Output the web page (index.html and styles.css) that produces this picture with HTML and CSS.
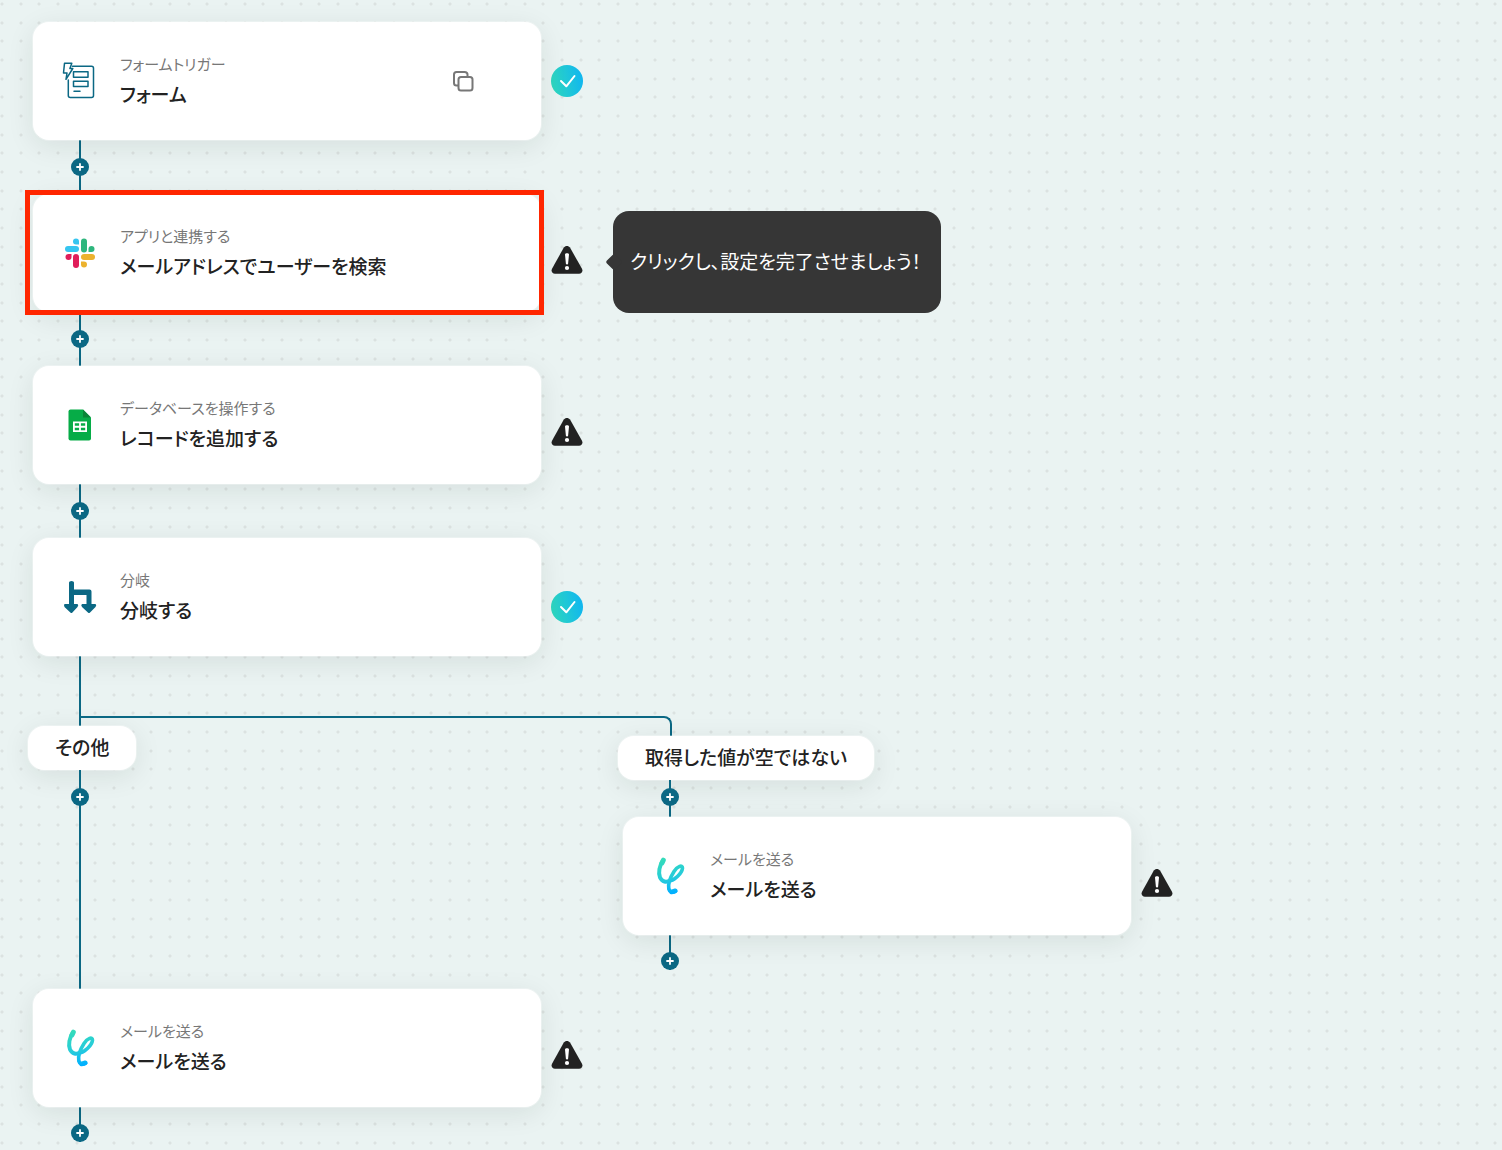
FILE: index.html
```html
<!DOCTYPE html>
<html lang="ja">

<head>
    <meta charset="UTF-8">
    <meta name="viewport" content="width=device-width, initial-scale=1.0">
    <title>フォーム</title>
    <link rel="stylesheet" href="styles.css">
</head>

<body>
    <!-- shared icons -->
    <svg class="defs" width="0" height="0" aria-hidden="true">
        <defs>
            <linearGradient id="checkFill" x1="0" y1="0.6" x2="1" y2="0.4">
                <stop offset="0" stop-color="#2fd8be" />
                <stop offset="1" stop-color="#10b6f0" />
            </linearGradient>
            <linearGradient id="logoFill" gradientUnits="userSpaceOnUse" x1="10" y1="2" x2="20" y2="37">
                <stop offset="0" stop-color="#35dcb8" />
                <stop offset="0.6" stop-color="#25cbdc" />
                <stop offset="1" stop-color="#00b0ff" />
            </linearGradient>
        </defs>
        <symbol id="check" viewBox="0 0 32 32">
            <circle cx="16" cy="16" r="16" fill="url(#checkFill)" />
            <path d="M10 16l5.300 5.300L23.500 11" fill="none" stroke="#fff" stroke-width="2" stroke-linecap="round" stroke-linejoin="round" />
        </symbol>
        <symbol id="warn" viewBox="0 0 32 30">
            <path d="M12.800 2.600C14.200 .300 17.600 .300 19 2.600L31 23.800C32.200 26.200 30.800 28.800 28 28.800H4C1.200 28.800 -.200 26.200 1 23.800Z" fill="#222" />
            <path d="M14 9.500c0-1.600 4-1.600 4 0l-.900 9.200c-.1 1.100-2.100 1.100-2.200 0z" fill="#fff" />
            <circle cx="16" cy="23" r="2.100" fill="#fff" />
        </symbol>
        <symbol id="plus" viewBox="0 0 18 18">
            <path d="M9 6v6M6 9h6" fill="none" stroke="#fff" stroke-width="1.800" stroke-linecap="round" />
        </symbol>
        <symbol id="mail" viewBox="0 0 36 40">
            <g fill="none" stroke="url(#logoFill)" stroke-linecap="round" stroke-linejoin="round">
                <path d="M11 4.500C7.500 9 6 17 8 21.500C10 26 14.500 26.500 18 24.500" stroke-width="4" />
                <path d="M11.300 4.200L10 7" stroke-width="5" />
                <path d="M16 25.500C23 24.500 30 17 30.500 12C30.500 8.500 25.500 10 22 15.500C18.500 21 15.800 28 16.800 33C17.500 36 20.500 37.300 23.600 35.300" stroke-width="3.600" />
                <path d="M19.500 36L23.300 34.800" stroke-width="4.600" />
            </g>
        </symbol>
    </svg>

    <main class="flow">
        <div class="step">
            <div class="card">
                <svg class="icon" viewBox="0 0 36 40" aria-hidden="true">
                    <g fill="none" stroke="#0b6884" stroke-width="1.500" stroke-linejoin="round" stroke-linecap="round">
                        <path d="M10.500 5.200H29.500Q31.500 5.200 31.500 7.200V34.500Q31.500 36.500 29.500 36.500H8.300Q6.300 36.500 6.300 34.500V19" />
                        <rect x="11.500" y="10.700" width="14.500" height="5.500" />
                        <rect x="11.500" y="20.300" width="14.500" height="5.300" />
                        <path d="M12 30.300h6" />
                        <path d="M2.500 2.300H9.800L7.900 7.500H10.800L4 18.300L5 12H1.500Z" fill="#fff" />
                    </g>
                </svg>
                <div class="text">
                    <p class="kind">フォームトリガー</p>
                    <h2 class="name">フォーム</h2>
                </div>
                <button type="button" class="copy" aria-label="コピー">
                    <svg width="22" height="22" viewBox="0 0 22 22" aria-hidden="true">
                        <g fill="none" stroke="#777" stroke-width="2">
                            <path d="M6 15.500H4.500Q2 15.500 2 13V4.500Q2 2 4.500 2H12.500Q15.500 2 15.500 4.500V6" />
                            <rect x="6.500" y="7" width="14" height="13.500" rx="2.500" />
                        </g>
                    </svg>
                </button>
            </div>
            <svg class="status" width="32" height="32" role="img" aria-label="設定完了"><use href="#check" /></svg>
        </div>

        <div class="link">
            <button type="button" class="add" aria-label="追加"><svg width="18" height="18"><use href="#plus" /></svg></button>
        </div>

        <div class="step">
            <div class="card selected">
                <svg class="icon" viewBox="0 0 36 40" aria-hidden="true">
                    <g fill="#36c5f0">
                        <path d="M17 11.500V8.500A3 3 0 1 0 14 11.500Z" />
                        <rect x="3" y="13" width="14" height="6" rx="3" />
                    </g>
                    <g fill="#2eb67d">
                        <rect x="19" y="5.500" width="6" height="14" rx="3" />
                        <path d="M26.500 19H29.500A3 3 0 1 0 26.500 16Z" />
                    </g>
                    <g fill="#ecb22e">
                        <rect x="19" y="21" width="14" height="6" rx="3" />
                        <path d="M19 28.500V31.500A3 3 0 1 0 22 28.500Z" />
                    </g>
                    <g fill="#e01e5a">
                        <rect x="11" y="21" width="6" height="14" rx="3" />
                        <path d="M9.500 21H6.500A3 3 0 1 0 9.500 24Z" />
                    </g>
                </svg>
                <div class="text">
                    <p class="kind">アプリと連携する</p>
                    <h2 class="name">メールアドレスでユーザーを検索</h2>
                </div>
            </div>
            <svg class="status warn" width="32" height="30" role="img" aria-label="未設定"><use href="#warn" /></svg>
            <div class="tooltip" role="tooltip">クリックし、設定を完了させましょう！</div>
        </div>

        <div class="link">
            <button type="button" class="add" aria-label="追加"><svg width="18" height="18"><use href="#plus" /></svg></button>
        </div>

        <div class="step">
            <div class="card">
                <svg class="icon" viewBox="0 0 36 40" aria-hidden="true">
                    <path d="M8.500 4.500H21L29 12.500V33.500Q29 35.500 27 35.500H8.500Q6.500 35.500 6.500 33.500V6.500Q6.500 4.500 8.500 4.500Z" fill="#06ac47" />
                    <path d="M21 4.500L29 12.500H21Z" fill="#0a8437" />
                    <path d="M11 16.500H25V27H11Z" fill="#fff" />
                    <path d="M12.800 18.300h4.300v2.500h-4.300zM18.900 18.300h4.300v2.500h-4.300zM12.800 22.700h4.300v2.500h-4.300zM18.900 22.700h4.300v2.500h-4.300z" fill="#06ac47" />
                </svg>
                <div class="text">
                    <p class="kind">データベースを操作する</p>
                    <h2 class="name">レコードを追加する</h2>
                </div>
            </div>
            <svg class="status warn" width="32" height="30" role="img" aria-label="未設定"><use href="#warn" /></svg>
        </div>

        <div class="link">
            <button type="button" class="add" aria-label="追加"><svg width="18" height="18"><use href="#plus" /></svg></button>
        </div>

        <div class="step">
            <div class="card">
                <svg class="icon" viewBox="0 0 36 40" aria-hidden="true">
                    <path d="M7 5.500Q7 4 9.500 4Q12 4 12 5.500V12.500H27.500Q29.500 12.500 29.500 14.500V27H33.500Q35 28 33.500 30L27.800 35.700Q27 36.500 26.200 35.700L20 30Q18.500 28 20 27H24.500V18H12V27H15.500Q17 28 15.500 30L10.200 35.700Q9.400 36.500 8.600 35.700L2.500 30Q1.500 28 2.500 27H7Z" fill="#0b6884" />
                </svg>
                <div class="text">
                    <p class="kind">分岐</p>
                    <h2 class="name">分岐する</h2>
                </div>
            </div>
            <svg class="status done" width="32" height="32" role="img" aria-label="設定完了"><use href="#check" /></svg>
        </div>

        <div class="branches">
            <section class="branch">
                <div class="trunk"></div>
                <h3 class="label">その他</h3>
                <div class="link">
                    <button type="button" class="add" aria-label="追加"><svg width="18" height="18"><use href="#plus" /></svg></button>
                </div>
                <div class="rail"></div>
            </section>

            <section class="branch side">
                <div class="elbow"></div>
                <h3 class="label">取得した値が空ではない</h3>
                <div class="link narrow">
                    <button type="button" class="add" aria-label="追加"><svg width="18" height="18"><use href="#plus" /></svg></button>
                </div>
                <div class="step">
                    <div class="card">
                        <svg class="icon" viewBox="0 0 36 40" aria-hidden="true"><use href="#mail" /></svg>
                        <div class="text">
                            <p class="kind">メールを送る</p>
                            <h2 class="name">メールを送る</h2>
                        </div>
                    </div>
                    <svg class="status warn" width="32" height="30" role="img" aria-label="未設定"><use href="#warn" /></svg>
                </div>
                <div class="link end">
                    <button type="button" class="add" aria-label="追加"><svg width="18" height="18"><use href="#plus" /></svg></button>
                </div>
            </section>
        </div>

        <div class="step">
            <div class="card">
                <svg class="icon" viewBox="0 0 36 40" aria-hidden="true"><use href="#mail" /></svg>
                <div class="text">
                    <p class="kind">メールを送る</p>
                    <h2 class="name">メールを送る</h2>
                </div>
            </div>
            <svg class="status warn" width="32" height="30" role="img" aria-label="未設定"><use href="#warn" /></svg>
        </div>
        <div class="link end">
            <button type="button" class="add" aria-label="追加"><svg width="18" height="18"><use href="#plus" /></svg></button>
        </div>
    </main>
</body>

</html>
```
FILE: styles.css
```css
:root {
    --line: #0b6884;
    --dot: #dbe2e1;
}

* {
    box-sizing: border-box;
}

body {
    margin: 0;
    min-height: 100vh;
    font-family: "Noto Sans CJK JP", sans-serif;
    font-feature-settings: "palt";
    color: #222;
    background-color: #eaf3f2;
    /* three dots per 56px tile in each direction */
    background-image:
        radial-gradient(circle at 2px 4px, var(--dot) 1px, transparent 2px),
        radial-gradient(circle at 21px 4px, var(--dot) 1px, transparent 2px),
        radial-gradient(circle at 39px 4px, var(--dot) 1px, transparent 2px),
        radial-gradient(circle at 2px 23px, var(--dot) 1px, transparent 2px),
        radial-gradient(circle at 21px 23px, var(--dot) 1px, transparent 2px),
        radial-gradient(circle at 39px 23px, var(--dot) 1px, transparent 2px),
        radial-gradient(circle at 2px 41px, var(--dot) 1px, transparent 2px),
        radial-gradient(circle at 21px 41px, var(--dot) 1px, transparent 2px),
        radial-gradient(circle at 39px 41px, var(--dot) 1px, transparent 2px);
    background-size: 56px 56px;
}

.defs {
    position: absolute;
}

.flow {
    padding: 22px 33px 8px;
}

.step {
    position: relative;
    display: flex;
    align-items: center;
    gap: 10px;
}

.card {
    position: relative;
    display: flex;
    align-items: center;
    width: 508px;
    padding: 28px 67px 28px 29px;
    background-color: #fff;
    border-radius: 16px;
    box-shadow: 0 0 0 1px rgba(255, 255, 255, 0.3), 0 6px 28px rgba(0, 30, 20, 0.09);
}

.card.selected::after {
    content: "";
    position: absolute;
    inset: -4px -3px -3px -8px;
    border: 5px solid #ff2600;
}

.icon {
    flex: none;
    width: 36px;
    height: 40px;
    margin-right: 22px;
}

.text {
    flex: 1;
    padding-bottom: 2px;
}

.kind,
.name {
    margin: 0;
}

.kind {
    font-size: 15px;
    font-weight: 400;
    line-height: 28px;
    color: #777;
}

.name {
    font-size: 19px;
    font-weight: 500;
    line-height: 32px;
}

.copy {
    display: flex;
    padding: 0;
    border: none;
    background: none;
    cursor: pointer;
}

.status {
    flex: none;
}

.status.warn {
    margin-top: 13px;
}

.status.done {
    margin-top: 20px;
}

.tooltip {
    position: absolute;
    left: 580px;
    top: 17px;
    padding: 34px 20px 36px 17px;
    border-radius: 16px;
    background-color: #363636;
    color: #fff;
    font-size: 19px;
    line-height: 32px;
    white-space: nowrap;
}

.tooltip::before {
    content: "";
    position: absolute;
    left: -5px;
    top: 45px;
    width: 12px;
    height: 12px;
    border-radius: 2px;
    background-color: #363636;
    transform: rotate(45deg);
}

.link {
    display: flex;
    align-items: center;
    justify-content: center;
    width: 18px;
    height: 54px;
    margin-left: 38px;
    background: linear-gradient(var(--line), var(--line)) center / 2px 100% no-repeat;
}

.link.narrow {
    height: 37px;
    padding-top: 8px;
    align-items: flex-start;
}

.link.end {
    height: 35px;
    align-items: flex-end;
}

.add {
    display: flex;
    padding: 0;
    border: none;
    border-radius: 50%;
    background-color: var(--line);
    cursor: pointer;
}

.branches {
    display: grid;
    grid-template-columns: 590px auto;
    justify-content: start;
}

.branch {
    display: flex;
    flex-direction: column;
    align-items: flex-start;
}

.branch.side {
    padding: 60px 0 19px;
}

.trunk,
.rail {
    width: 2px;
    margin-left: 46px;
    background-color: var(--line);
}

.trunk {
    height: 70px;
}

.rail {
    flex: 1;
}

/* runs from the main line over to the side branch */
.elbow {
    width: 593px;
    height: 20px;
    margin-left: -544px;
    border: solid var(--line);
    border-width: 2px 2px 0 0;
    border-top-right-radius: 8px;
}

.label {
    margin: 0 0 0 -5px;
    padding: 5px 27px 7px;
    border-radius: 16px;
    background-color: #fff;
    box-shadow: 0 0 0 1px rgba(255, 255, 255, 0.3), 0 6px 28px rgba(0, 30, 20, 0.09);
    font-size: 19px;
    font-weight: 500;
    line-height: 32px;
}
```
